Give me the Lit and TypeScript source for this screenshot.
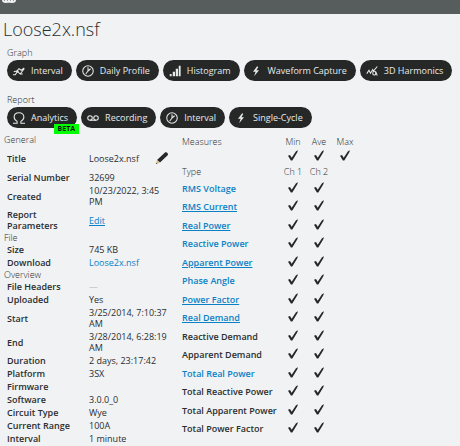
import { LitElement, html, css, svg, nothing } from "lit";
import { customElement } from "lit/decorators.js";

const icons = {
  lines: svg`<path d="M0 13h3l3-4.500 3.500 3.500L15 5M1 9l4-1 3-3 3 2 4-3M9 12h4"/><circle cx="6" cy="8.500" r=".8"/>`,
  clock: svg`<circle cx="8" cy="8" r="7"/><path d="M8 3v5M8 8l3.500-3M8 8l-3 4"/>`,
  bars: svg`<path class="solid" d="M1 12h2.500v3H1zM5 9h3v6H5zM9 5h3v10H9zM13 1h2.500v14H13z"/>`,
  bolt: svg`<path class="solid" d="M9.500 1.500 4 9h3.500L5.500 15 12 7H8.500L11 2.500z"/>`,
  harmonics: svg`<path d="M1 11.500 4 7l2 4 3-5 1 2 5-6M9 11c0-3.500 4-3.500 4 0s-4 3-4 0M13 9l2 5"/>`,
  omega: svg`<path d="M0 15h5.500v-2.500C2.800 11 1.500 9 1.500 6.800 1.500 3.300 4.300 1 8 1s6.500 2.300 6.500 5.800c0 2.200-1.300 4.200-4 5.700V15H16"/>`,
  tape: svg`<circle cx="4" cy="8" r="3"/><circle cx="12" cy="8" r="3"/><path d="M4 11h8"/>`,
};
type IconName = keyof typeof icons;

const icon = (name: IconName) =>
  html`<svg class="icon" viewBox="0 0 16 16" aria-hidden="true">${icons[name]}</svg>`;

const check = html`<svg class="check" viewBox="0 0 10 11" role="img" aria-label="Yes">
  <path d="M0 5.800 2 4.900 3.700 7.700 8 1.200 10 .2 9.200 2.500 4.300 10.500H2.900z" />
</svg>`;

const graphs: [IconName, string][] = [
  ["lines", "Interval"],
  ["clock", "Daily Profile"],
  ["bars", "Histogram"],
  ["bolt", "Waveform Capture"],
  ["harmonics", "3D Harmonics"],
];
const reports: [IconName, string, string?][] = [
  ["omega", "Analytics", "BETA"],
  ["tape", "Recording"],
  ["clock", "Interval"],
  ["bolt", "Single-Cycle"],
];

const link = (text: string, cls = "") => html`<a class=${cls} href="#">${text}</a>`;

const sections: { name: string; rows: [string, unknown][] }[] = [
  {
    name: "General",
    rows: [
      ["Title", "Loose2x.nsf"],
      ["Serial Number", "32699"],
      ["Created", "10/23/2022, 3:45 PM"],
      ["Report Parameters", link("Edit", "underlined")],
    ],
  },
  { name: "File", rows: [["Size", "745 KB"], ["Download", link("Loose2x.nsf")]] },
  {
    name: "Overview",
    rows: [
      ["File Headers", html`<span class="empty">—</span>`],
      ["Uploaded", "Yes"],
      ["Start", "3/25/2014, 7:10:37 AM"],
      ["End", "3/28/2014, 6:28:19 AM"],
      ["Duration", "2 days, 23:17:42"],
      ["Platform", "3SX"],
      ["Firmware", ""],
      ["Software", "3.0.0_0"],
      ["Circuit Type", "Wye"],
      ["Current Range", "100A"],
      ["Interval", "1 minute"],
    ],
  },
];

const types: [string, string?][] = [
  ["RMS Voltage", "plain"],
  ["RMS Current", "underlined"],
  ["Real Power", "underlined"],
  ["Reactive Power", "plain"],
  ["Apparent Power", "underlined"],
  ["Phase Angle", "plain"],
  ["Power Factor", "underlined"],
  ["Real Demand", "underlined"],
  ["Reactive Demand"],
  ["Apparent Demand"],
  ["Total Real Power", "plain"],
  ["Total Reactive Power"],
  ["Total Apparent Power"],
  ["Total Power Factor"],
];

@customElement("app-root")
export class AppRoot extends LitElement {
  static styles = css`
    :host {
      display: block;
      min-height: 100vh;
      background: #f0f2f4;
      color: #2b2e2f;
      font: 400 9px/11px "Open Sans", "Noto Sans", sans-serif;
      overflow: hidden;
    }
    header {
      height: 14px;
      background: #575d5c;
      overflow: hidden;
    }
    .brand {
      display: block;
      width: 14px;
      height: 3px;
      margin-left: 2px;
      fill: none;
      stroke: #f0f2f4;
      stroke-width: 2;
    }
    h1 {
      margin: 0 3px;
      padding: 2px 0 4px;
      font-size: 18px;
      line-height: 26px;
      font-weight: 300;
    }
    h2 {
      margin: 0;
      font-size: 9px;
      line-height: 14px;
      font-weight: 300;
    }
    .tools {
      padding: 0 6px 0 7px;
      margin-bottom: 12px;
    }
    .tools.last {
      margin-bottom: 6px;
    }
    .buttons {
      display: flex;
      flex-wrap: wrap;
      gap: 4px;
    }
    button {
      position: relative;
      display: flex;
      align-items: center;
      gap: 6px;
      height: 21px;
      padding: 0 9px 0 6px;
      border: 0;
      border-radius: 11px;
      background: #252827;
      color: #e8eaea;
      font: 400 9px/14px "Open Sans", "Noto Sans", sans-serif;
      white-space: nowrap;
    }
    .icon {
      width: 12px;
      height: 12px;
      fill: none;
      stroke: currentColor;
      stroke-width: 1.4;
    }
    .icon .solid {
      fill: currentColor;
      stroke: none;
    }
    .badge {
      position: absolute;
      right: -2px;
      bottom: -6px;
      padding: 0 4px;
      background: #00ff00;
      color: #101510;
      font-size: 7px;
      line-height: 10px;
      font-weight: 700;
    }
    .columns {
      display: grid;
      grid-template-columns: 170px 1fr;
      gap: 8px;
      padding-left: 4px;
      align-items: start;
    }
    table {
      border-collapse: collapse;
      border-spacing: 0;
    }
    th,
    td {
      padding: 1px 0;
      text-align: left;
      font-weight: 400;
    }
    .details {
      width: 100%;
      table-layout: fixed;
    }
    .details .label {
      padding: 1px 16px 1px 3px;
      font-weight: 600;
    }
    .details .group {
      padding: 0;
      line-height: 11px;
      font-weight: 300;
    }
    .labelCol {
      width: 85px;
    }
    .titleRow .label,
    .titleRow td {
      height: 24px;
    }
    .titleValue {
      display: flex;
      align-items: center;
      justify-content: space-between;
      padding-right: 5px;
    }
    .edit {
      width: 14px;
      height: 14px;
      padding: 0;
      background: none;
      border-radius: 0;
    }
    .pencil {
      width: 14px;
      height: 14px;
    }
    .value {
      display: block;
      max-width: 82px;
    }
    a {
      color: #0b81c5;
      text-decoration: none;
    }
    .underlined {
      text-decoration: underline;
    }
    .empty {
      color: #b5b8ba;
    }
    .measures {
      justify-self: start;
      table-layout: fixed;
      width: 176px;
    }
    .nameCol {
      width: 98px;
    }
    .cellCol {
      width: 26px;
    }
    .measures th,
    .measures td {
      padding: 0;
      white-space: nowrap;
    }
    .measures .cell {
      text-align: center;
    }
    .measures thead th {
      height: 15px;
      font-weight: 300;
    }
    .measures thead td {
      height: 15px;
    }
    .measures tbody th {
      height: 18px;
      font-weight: 600;
    }
    .measures tbody tr:nth-child(even) th {
      height: 19px;
    }
    .check {
      display: block;
      margin: 0 auto;
      padding-bottom: 2px;
      width: 10px;
      height: 11px;
      fill: #252827;
    }
  `;

  private toolButtons(items: [IconName, string, string?][]) {
    return html`<div class="buttons">
      ${items.map(
        ([name, text, badge]) => html`<button type="button">
          ${icon(name)}<span>${text}</span>${badge ? html`<span class="badge">${badge}</span>` : nothing}
        </button>`
      )}
    </div>`;
  }

  private detailValue(label: string, value: unknown) {
    if (label !== "Title") return html`<span class="value">${value}</span>`;
    return html`<div class="titleValue">
      <span>${value}</span>
      <button class="edit" type="button" aria-label="Edit title">
        <svg class="pencil" viewBox="0 0 14 14" aria-hidden="true">
          <path fill="#252827" d="M2 9 10 1.500C11 .5 14 2.500 12.700 4.300L5 11.500z" />
          <path fill="#d9b98a" d="M2 9 5 11.500 1 13z" />
          <path fill="#252827" d="M1.300 11.700 2.500 12.600 1 13z" />
        </svg>
      </button>
    </div>`;
  }

  render() {
    return html`
      <header>
        <svg class="brand" viewBox="0 0 14 3" aria-hidden="true">
          <path d="M1 0q0 2 3 2t3-2q0 2 3 2t3-2M4 0v2M10 0v2" />
        </svg>
      </header>
      <main>
        <h1>Loose2x.nsf</h1>
        <section class="tools">
          <h2>Graph</h2>
          ${this.toolButtons(graphs)}
        </section>
        <section class="tools last">
          <h2>Report</h2>
          ${this.toolButtons(reports)}
        </section>
        <div class="columns">
          <table class="details">
            <colgroup><col class="labelCol" /><col /></colgroup>
            ${sections.map(
              (s) => html`<tbody>
                <tr><th class="group" colspan="2">${s.name}</th></tr>
                ${s.rows.map(
                  ([label, value]) => html`<tr class=${label === "Title" ? "titleRow" : ""}>
                    <th class="label" scope="row">${label}</th>
                    <td>${this.detailValue(label, value)}</td>
                  </tr>`
                )}
              </tbody>`
            )}
          </table>
          <table class="measures">
            <colgroup>
              <col class="nameCol" /><col class="cellCol" /><col class="cellCol" /><col class="cellCol" />
            </colgroup>
            <thead>
              <tr>
                <th>Measures</th>
                <th class="cell">Min</th><th class="cell">Ave</th><th class="cell">Max</th>
              </tr>
              <tr>
                <td></td>
                <td class="cell">${check}</td><td class="cell">${check}</td><td class="cell">${check}</td>
              </tr>
              <tr>
                <th>Type</th>
                <th class="cell">Ch 1</th><th class="cell">Ch 2</th>
              </tr>
            </thead>
            <tbody>
              ${types.map(
                ([name, style]) => html`<tr>
                  <th scope="row">${style ? link(name, style) : name}</th>
                  <td class="cell">${check}</td><td class="cell">${check}</td>
                </tr>`
              )}
            </tbody>
          </table>
        </div>
      </main>
    `;
  }
}
